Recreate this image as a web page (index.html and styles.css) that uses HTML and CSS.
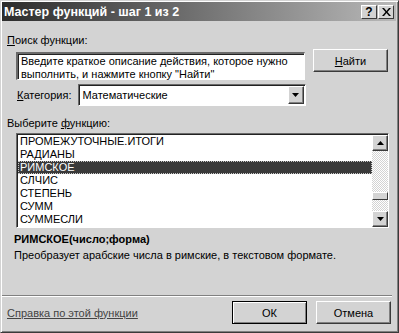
FILE: index.html
```html
<!DOCTYPE html>
<html lang="ru">
<head>
   <meta charset="UTF-8">
   <title>Мастер функций - шаг 1 из 2</title>
   <link rel="stylesheet" href="styles.css">
</head>
<body>
<div class="window">
   <div class="titlebar">
      <span class="title">Мастер функций - шаг 1 из 2</span>
      <div class="caption-buttons">
         <span class="cap-btn">?</span>
         <span class="cap-btn close">
            <svg width="9" height="8" viewBox="0 0 9 8"><path d="M0 0h2l2.5 3 2.5-3h2L5.5 4 9 8H7L4.5 5 2 8H0l3.5-4z" fill="#000"/></svg>
         </span>
      </div>
   </div>

   <div class="content">
      <div class="label search-label"><u>П</u>оиск функции:</div>
      <div class="search-row">
         <div class="textbox">Введите краткое описание действия, которое нужно выполнить, и нажмите кнопку "Найти"</div>
         <div class="button find"><u>Н</u>айти</div>
      </div>

      <div class="cat-row">
         <span class="label"><u>К</u>атегория:</span>
         <div class="select">
            <span class="select-text">Математические</span>
            <span class="drop-btn"><svg width="7" height="4" viewBox="0 0 7 4"><path d="M0 0h7L3.5 4z" fill="#000"/></svg></span>
         </div>
      </div>

      <div class="label list-label">Выберите <u>ф</u>ункцию:</div>
      <div class="listbox">
         <ul class="items">
            <li>ПРОМЕЖУТОЧНЫЕ.ИТОГИ</li>
            <li>РАДИАНЫ</li>
            <li class="selected">РИМСКОЕ</li>
            <li>СЛЧИС</li>
            <li>СТЕПЕНЬ</li>
            <li>СУММ</li>
            <li>СУММЕСЛИ</li>
         </ul>
         <div class="scrollbar">
            <span class="sb-btn"><svg width="7" height="4" viewBox="0 0 7 4"><path d="M3.5 0L7 4H0z" fill="#000"/></svg></span>
            <div class="sb-track"><span class="sb-thumb"></span></div>
            <span class="sb-btn"><svg width="7" height="4" viewBox="0 0 7 4"><path d="M0 0h7L3.5 4z" fill="#000"/></svg></span>
         </div>
      </div>

      <div class="signature">РИМСКОЕ(число;форма)</div>
      <div class="description">Преобразует арабские числа в римские, в текстовом формате.</div>

      <div class="separator"></div>

      <div class="bottom-row">
         <span class="help-link">Справка по этой функции</span>
         <div class="button ok">ОК</div>
         <div class="button cancel">Отмена</div>
      </div>
   </div>
</div>
</body>
</html>
```

FILE: styles.css
```css
body {
   margin: 0;
   background-color: #d3d3d3;
   font-family: "Liberation Sans", Arial, sans-serif;
   font-size: 11px;
   color: #000;
}
.window {
   width: 399px;
   height: 333px;
   box-sizing: border-box;
   background-color: #d3d3d3;
   border: 1px solid;
   border-color: #d3d3d3 #3a3a3a #3a3a3a #d3d3d3;
   box-shadow: inset 1px 1px #fff, inset -1px -1px #808080;
   padding: 1px 2px 0 1px;
}
.titlebar {
   height: 19px;
   display: flex;
   align-items: center;
   justify-content: space-between;
   background: linear-gradient(to right, #2c2c2c, #b8b8b8);
   padding-left: 2px;
}
.title {
   color: #fff;
   font-weight: bold;
   font-size: 12.5px;
}
.caption-buttons {
   display: flex;
   gap: 1px;
   margin-right: 2px;
}
.cap-btn {
   width: 16px;
   height: 14px;
   box-sizing: border-box;
   display: flex;
   align-items: center;
   justify-content: center;
   background-color: #d3d3d3;
   border-top: 1px solid #fff;
   border-left: 1px solid #fff;
   border-right: 1px solid #3a3a3a;
   border-bottom: 1px solid #3a3a3a;
   font-weight: bold;
   font-size: 12px;
}
.content {
   display: flex;
   flex-direction: column;
}
.label {
   line-height: 14px;
}
.search-label {
   margin: 12px 0 0 5px;
}
.search-row {
   display: flex;
   align-items: flex-start;
   margin: 2px 0 0 14px;
}
.textbox {
   width: 289px;
   height: 28px;
   box-sizing: border-box;
   margin-top: 3px;
   background-color: #fff;
   border-top: 2px solid #6a6a6a;
   border-left: 2px solid #6a6a6a;
   border-right: 1px solid #fff;
   border-bottom: 1px solid #fff;
   box-shadow: inset 1px 1px #222;
   padding: 1px 3px 0;
   line-height: 13px;
}
.button {
   box-sizing: border-box;
   width: 75px;
   height: 23px;
   display: flex;
   align-items: center;
   justify-content: center;
   background-color: #d3d3d3;
   border-top: 1px solid #fff;
   border-left: 1px solid #fff;
   border-right: 1px solid #3a3a3a;
   border-bottom: 1px solid #3a3a3a;
   box-shadow: inset -1px -1px #808080;
}
.find {
   margin-left: 8px;
}
.cat-row {
   display: flex;
   align-items: center;
   margin: 4px 0 0 15px;
}
.select {
   width: 228px;
   height: 22px;
   box-sizing: border-box;
   margin-left: 6px;
   display: flex;
   align-items: center;
   justify-content: space-between;
   background-color: #fff;
   border-top: 1px solid #6a6a6a;
   border-left: 1px solid #6a6a6a;
   border-right: 1px solid #fff;
   border-bottom: 1px solid #fff;
   box-shadow: inset 1px 1px #222;
   padding: 1px 1px 1px 4px;
}
.drop-btn, .sb-btn {
   width: 16px;
   height: 18px;
   box-sizing: border-box;
   display: flex;
   align-items: center;
   justify-content: center;
   background-color: #d3d3d3;
   border-top: 1px solid #fff;
   border-left: 1px solid #fff;
   border-right: 1px solid #3a3a3a;
   border-bottom: 1px solid #3a3a3a;
   box-shadow: inset -1px -1px #808080;
}
.list-label {
   margin: 10px 0 0 5px;
}
.listbox {
   width: 373px;
   height: 95px;
   box-sizing: border-box;
   margin: 3px 0 0 14px;
   display: flex;
   background-color: #fff;
   border-top: 1px solid #6a6a6a;
   border-left: 1px solid #6a6a6a;
   border-right: 1px solid #fff;
   border-bottom: 1px solid #fff;
   box-shadow: inset 1px 1px #222;
   padding: 1px 0 0 1px;
}
.items {
   flex: 1;
   list-style: none;
   margin: 0;
   padding: 0;
}
.items li {
   height: 13px;
   line-height: 13px;
   padding-left: 2px;
   box-sizing: border-box;
}
.items li.selected {
   background-color: #3a3a3a;
   color: #fff;
   outline: 1px dotted #c8c8c8;
   outline-offset: -1px;
}
.scrollbar {
   width: 16px;
   display: flex;
   flex-direction: column;
}
.sb-btn {
   height: 16px;
}
.sb-track {
   flex: 1;
   background-color: #e8e8e8;
   background-image: repeating-conic-gradient(#d3d3d3 0 25%, #fff 0 50%);
   background-size: 2px 2px;
   padding-top: 41px;
}
.sb-thumb {
   display: block;
   height: 8px;
   box-sizing: border-box;
   background-color: #d3d3d3;
   border-top: 1px solid #fff;
   border-left: 1px solid #fff;
   border-right: 1px solid #3a3a3a;
   border-bottom: 1px solid #3a3a3a;
}
.signature {
   margin: 4px 0 0 12px;
   line-height: 14px;
   font-weight: bold;
}
.description {
   margin: 2px 0 0 12px;
   line-height: 14px;
}
.separator {
   margin: 33px 4px 0 0;
   border-top: 1px solid #808080;
   border-bottom: 1px solid #fff;
}
.bottom-row {
   display: flex;
   align-items: center;
   margin: 4px 0 0 5px;
}
.help-link {
   color: #444;
   text-decoration: underline;
   flex: 1;
}
.ok {
   border: 1px solid #000;
   box-shadow: inset 1px 1px #fff, inset -1px -1px #808080;
}
.cancel {
   margin: 0 5px 0 9px;
}
```
